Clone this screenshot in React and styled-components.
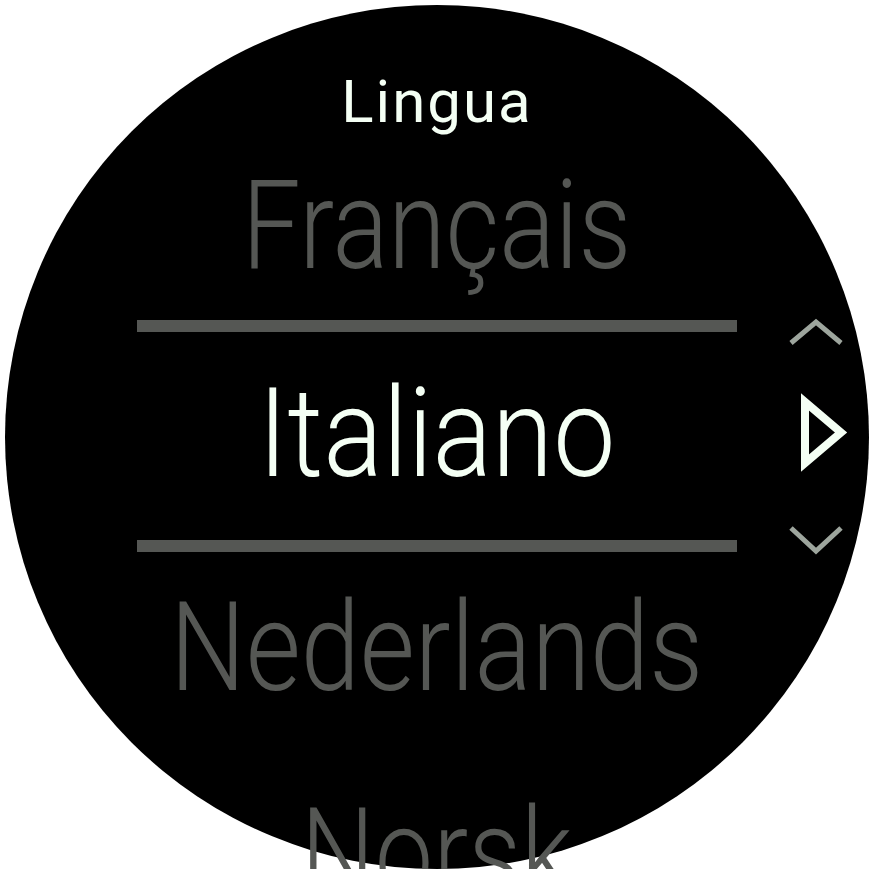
import React from 'react';
import styled, { createGlobalStyle } from 'styled-components';

const GlobalStyle = createGlobalStyle`
  html, body {
    margin: 0;
    padding: 0;
    background: #ffffff;
    overflow: hidden;
  }
  body {
    font-family: Roboto, "Liberation Sans", sans-serif;
  }
`;

const languages = {
  above: { label: 'Français', scale: 0.84 },
  selected: { label: 'Italiano', scale: 0.895 },
  below: [
    { label: 'Nederlands', scale: 0.858 },
    { label: 'Norsk', scale: 0.84 },
  ],
};

const App = () => {
  return (
    <Page>
      <GlobalStyle />
      <Watch>
        <Title>Lingua</Title>
        <Option $gap={32}>
          <Word $scale={languages.above.scale}>{languages.above.label}</Word>
        </Option>
        <SelectionRow>
          <span />
          <Selection>
            <Divider />
            <Option $gap={40} $active>
              <Word $scale={languages.selected.scale}>
                {languages.selected.label}
              </Word>
            </Option>
            <Divider $gap={44} />
          </Selection>
          <ScrollHint />
        </SelectionRow>
        <Option $gap={26}>
          <Word $scale={languages.below[0].scale}>
            {languages.below[0].label}
          </Word>
        </Option>
        <Option $gap={82}>
          <Word $scale={languages.below[1].scale}>
            {languages.below[1].label}
          </Word>
        </Option>
      </Watch>
    </Page>
  );
};

const ScrollHint = () => (
  <HintIcon width="68" height="248" viewBox="0 0 68 248">
    <polyline
      points="7,31 32,10 57,31"
      fill="none"
      stroke="#9da59d"
      strokeWidth="5"
      strokeLinejoin="miter"
    />
    <polygon
      points="21,90 21,151 57,120.5"
      fill="none"
      stroke="#f4fff4"
      strokeWidth="8"
      strokeLinejoin="miter"
    />
    <polyline
      points="7,216 32,239 57,216"
      fill="none"
      stroke="#9da59d"
      strokeWidth="5"
      strokeLinejoin="miter"
    />
  </HintIcon>
);

export default App;

const Page = styled.div`
  padding: 5px 0 0 5px;
`;

const Watch = styled.div`
  display: flex;
  flex-direction: column;
  align-items: center;
  width: 864px;
  height: 864px;
  border-radius: 50%;
  background: #000000;
  padding-top: 67px;
  box-sizing: border-box;
`;

const Title = styled.div`
  font-size: 60px;
  line-height: 60px;
  font-weight: 400;
  letter-spacing: 2px;
  color: #f4fff4;
`;

const Option = styled.div`
  margin-top: ${p => p.$gap || 0}px;
  font-size: 124px;
  line-height: 124px;
  font-weight: 300;
  color: ${p => (p.$active ? '#f4fff4' : '#555754')};
  white-space: nowrap;
  text-align: center;
`;

const Word = styled.span`
  display: inline-block;
  transform: scaleX(${p => p.$scale});
`;

const SelectionRow = styled.div`
  display: grid;
  grid-template-columns: 1fr 600px 1fr;
  align-items: start;
  width: 100%;
  margin-top: 32px;
`;

const Selection = styled.div`
  display: flex;
  flex-direction: column;
  align-items: stretch;
`;

const Divider = styled.div`
  height: 12px;
  margin-top: ${p => p.$gap || 0}px;
  background: #555754;
`;

const HintIcon = styled.svg`
  display: block;
  margin: -8px 0 0 47px;
`;
